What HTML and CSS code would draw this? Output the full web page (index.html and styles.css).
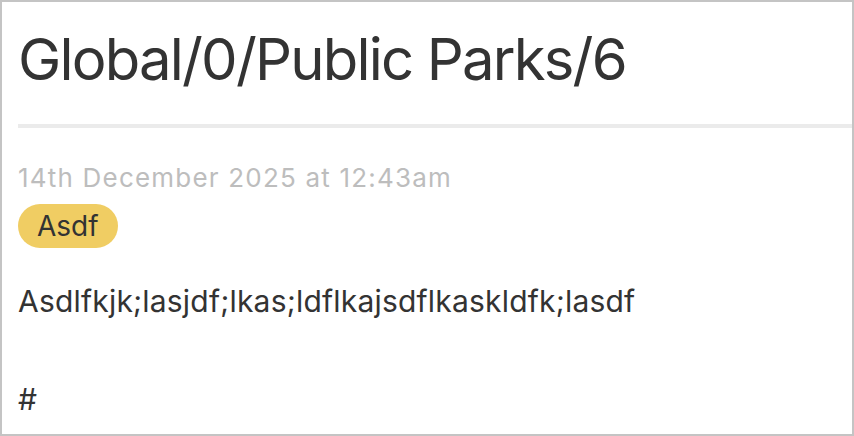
FILE: index.html
```html
<!DOCTYPE html>
<html>
<head>
<meta charset="utf-8">
<link rel="stylesheet" href="styles.css">
</head>
<body>
<div class="frame">
  <h1 class="title">Global/0/Public Parks/6</h1>
  <hr class="rule">
  <div class="date">14th December 2025 at 12:43am</div>
  <div class="tags"><span class="tag">Asdf</span></div>
  <p class="body">Asdlfkjk;lasjdf;lkas;ldflkajsdflkaskldfk;lasdf</p>
  <p class="body hash">#</p>
</div>
</body>
</html>
```
FILE: styles.css
```css
html, body {
  margin: 0;
  padding: 0;
  background: #fff;
}
.frame {
  box-sizing: border-box;
  width: 854px;
  height: 436px;
  border: 2px solid #c4c4c4;
  padding: 22px 0 0 16px;
  font-family: Inter, "Noto Sans", sans-serif;
  color: #333;
  overflow: hidden;
}
.title {
  margin: 0;
  font-size: 58px;
  font-weight: 400;
  line-height: 70px;
  letter-spacing: -1.8px;
  color: #333;
}
.rule {
  margin: 30px 0 0 0;
  border: 0;
  height: 4px;
  background: #ebebeb;
}
.date {
  margin-top: 35px;
  font-size: 26px;
  line-height: 30px;
  letter-spacing: 1.2px;
  color: #bdbdbd;
}
.tags {
  margin-top: 11px;
  height: 44px;
}
.tag {
  display: inline-block;
  background: #f0cd63;
  border-radius: 22px;
  padding: 0 19px;
  height: 44px;
  line-height: 44px;
  font-size: 28px;
  color: #333;
}
.body {
  margin: 35px 0 0 0;
  font-size: 30px;
  line-height: 36px;
  letter-spacing: 0.2px;
}
.hash {
  margin-top: 62px;
}
```
